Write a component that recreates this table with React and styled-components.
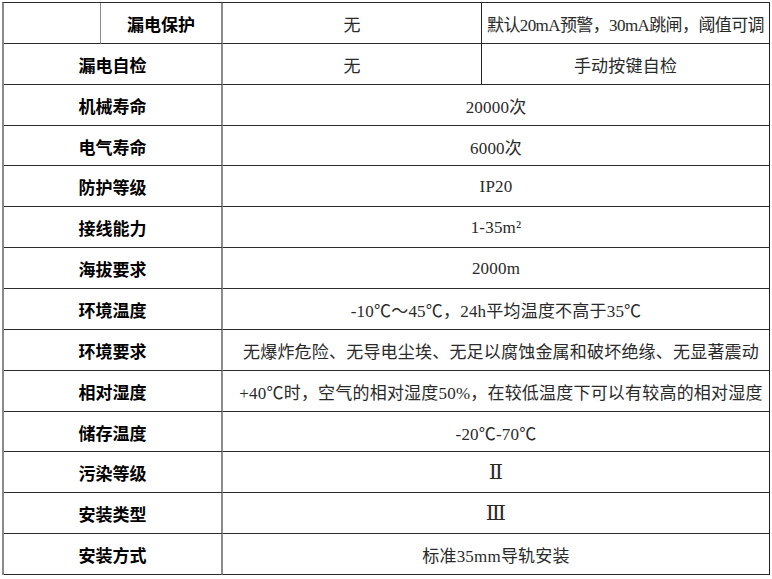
import React from "react";
import styled, { createGlobalStyle } from "styled-components";

const Global = createGlobalStyle`
  html, body { margin: 0; padding: 0; background: #fff; }
  body { width: 772px; height: 579px; overflow: hidden; }
`;

const Table = styled.div`
  display: grid;
  grid-template-columns: 97px 122px 259px 287px;
  grid-auto-rows: 40.86px;
  margin: 2px 0 0 2px;
  width: 768px;
  box-sizing: border-box;
  border-top: 1px solid #2a2a2a;
  border-left: 2px solid #8a8a8a;
  border-right: 1px solid #222;
`;

const dividers = {
  none: "none",
  thin: "1px solid #8a8a8a",
  grey: "2px solid #8c8c8c",
  dark: "1px solid #222",
};

const Cell = styled.div`
  grid-column: span ${(p) => p.$span || 1};
  box-sizing: border-box;
  border-bottom: 1px solid #2b2b2b;
  border-right: ${(p) => dividers[p.$divider || "none"]};
  display: flex;
  align-items: center;
  justify-content: center;
  white-space: nowrap;
  overflow: hidden;
  padding-left: ${(p) => p.$shift || 0}px;
`;

const Label = styled.span`
  font-family: "Noto Sans CJK SC", "Liberation Sans", sans-serif;
  font-weight: 700;
  font-size: 17px;
  color: #000;
  padding-top: 1px;
`;

const Value = styled.span`
  font-family: "Liberation Serif", "Noto Sans CJK SC", serif;
  font-weight: 400;
  font-size: 17px;
  color: #2a2a2a;
  letter-spacing: ${(p) => (p.$tight ? "-0.6px" : "0.2px")};
  padding-top: 1px;
`;

const Roman = styled.span`
  font-family: "DejaVu Serif", "Liberation Serif", serif;
  font-size: 21px;
  color: #2a2a2a;
`;

const rows = [
  ["机械寿命", "20000次"],
  ["电气寿命", "6000次"],
  ["防护等级", "IP20"],
  ["接线能力", "1-35m²"],
  ["海拔要求", "2000m"],
  ["环境温度", "-10℃～45℃，24h平均温度不高于35℃"],
  ["环境要求", "无爆炸危险、无导电尘埃、无足以腐蚀金属和破坏绝缘、无显著震动", false, 10],
  ["相对湿度", "+40℃时，空气的相对湿度50%，在较低温度下可以有较高的相对湿度", false, 10],
  ["储存温度", "-20℃-70℃"],
  ["污染等级", "Ⅱ", true],
  ["安装类型", "Ⅲ", true],
  ["安装方式", "标准35mm导轨安装"],
];

export default function App() {
  return (
    <>
      <Global />
      <Table>
        <Cell $divider="thin" />
        <Cell $divider="grey">
          <Label>漏电保护</Label>
        </Cell>
        <Cell $divider="dark">
          <Value>无</Value>
        </Cell>
        <Cell>
          <Value $tight>默认20mA预警，30mA跳闸，阈值可调</Value>
        </Cell>

        <Cell $span={2} $divider="grey">
          <Label>漏电自检</Label>
        </Cell>
        <Cell $divider="dark">
          <Value>无</Value>
        </Cell>
        <Cell>
          <Value>手动按键自检</Value>
        </Cell>

        {rows.map(([label, value, roman, shift]) => (
          <React.Fragment key={label}>
            <Cell $span={2} $divider="grey">
              <Label>{label}</Label>
            </Cell>
            <Cell $span={2} $shift={shift}>
              {roman ? <Roman>{value}</Roman> : <Value>{value}</Value>}
            </Cell>
          </React.Fragment>
        ))}
      </Table>
    </>
  );
}
